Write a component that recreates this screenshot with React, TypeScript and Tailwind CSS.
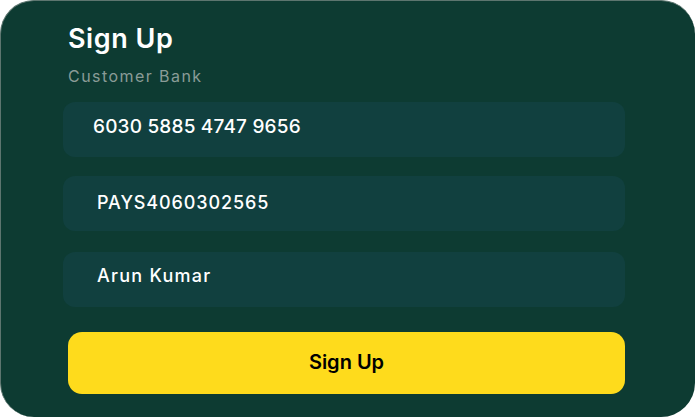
import React from 'react';

const fields = [
  { value: '6030 5885 4747 9656', cls: 'mt-4 pl-[30px] pb-[4px] text-[19px] tracking-[0.01em]' },
  { value: 'PAYS4060302565', cls: 'mt-[19px] pl-[34px] pb-[2px] text-[18px] tracking-[0.05em]' },
  { value: 'Arun Kumar', cls: 'mt-[21px] pl-[34px] pb-[8px] text-[18px] tracking-[0.07em]' },
];

export default function App() {
  return (
    <div className="w-[696px] h-[418px] bg-white" style={{ fontFamily: 'Inter, "Noto Sans", sans-serif' }}>
      <div className="w-[695px] h-[417px] rounded-[34px] bg-[#0d3b32] border-t border-l border-[#5d756f] pl-[62px] pr-[71px] pt-[21px] flex flex-col">
        <h1 className="ml-[5px] text-[27px] leading-[34px] font-semibold text-white tracking-[0.02em]">Sign Up</h1>
        <p className="ml-[5px] mt-[10px] text-[16px] leading-[20px] text-[#8a9b97] tracking-[0.09em]">Customer Bank</p>

        {fields.map((f) => (
          <div
            key={f.value}
            className={`h-[55px] w-[562px] rounded-[12px] bg-[#11403f] flex items-center text-white font-medium ${f.cls}`}
          >
            {f.value}
          </div>
        ))}

        <button className="mt-[25px] ml-[5px] h-[62px] w-[557px] rounded-[14px] bg-[#fedb1c] flex items-center justify-center pb-[3px] text-[20px] font-semibold text-black">
          Sign Up
        </button>
      </div>
    </div>
  );
}
